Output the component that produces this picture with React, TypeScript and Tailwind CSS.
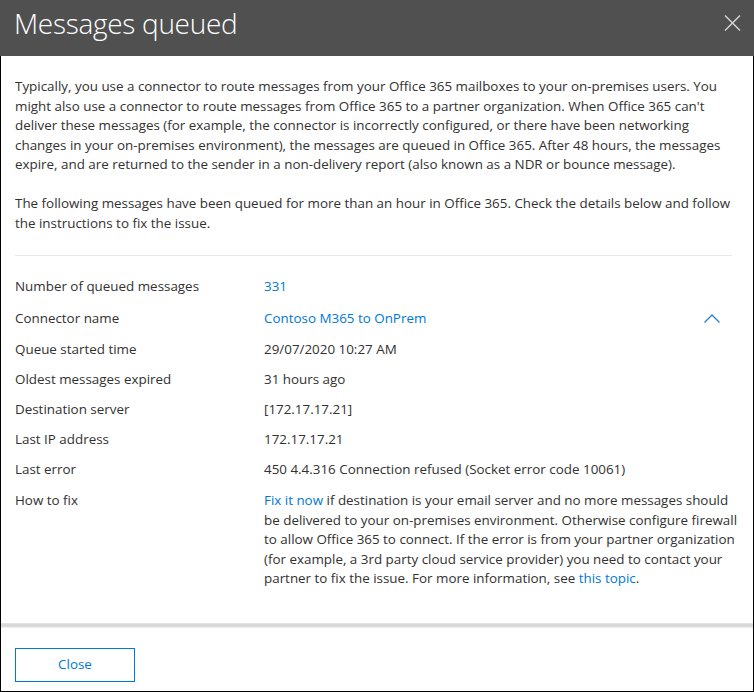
const rows: { label: string; value: React.ReactNode; tall?: boolean }[] = [
  { label: "Number of queued messages", value: <a className="text-[#0078d4]">331</a> },
  { label: "Connector name", value: <a className="text-[#0078d4]">Contoso M365 to OnPrem</a>, tall: true },
  { label: "Queue started time", value: "29/07/2020 10:27 AM" },
  { label: "Oldest messages expired", value: "31 hours ago" },
  { label: "Destination server", value: "[172.17.17.21]" },
  { label: "Last IP address", value: "172.17.17.21" },
  { label: "Last error", value: "450 4.4.316 Connection refused (Socket error code 10061)" },
];

export default function App() {
  return (
    <div
      className="w-[754px] h-[692px] flex flex-col bg-white border-x border-b border-black text-[#323130] text-[13.4px] leading-[19.5px]"
      style={{ fontFamily: '"Segoe UI", "Open Sans", "Noto Sans", sans-serif' }}
    >
      {/* header */}
      <div className="h-[56px] -mx-px bg-[#505050] flex items-start justify-between pl-[14px] pr-[13px]">
        <h1 className="text-white text-[28px] font-light leading-none mt-[9px] tracking-[-0.3px]">Messages queued</h1>
        <button className="mt-[15px] text-[#d6d6d6]">
          <svg width="17" height="16" viewBox="0 0 17 16" fill="none" stroke="currentColor" strokeWidth="1.4">
            <path d="M1 0.5 16 15.5M16 0.5 1 15.5" />
          </svg>
        </button>
      </div>

      {/* body */}
      <div className="flex-1 pl-[14px] pr-[21px] pt-[21px]">
        <p className="whitespace-nowrap">
          Typically, you use a connector to route messages from your Office 365 mailboxes to your on-premises users. You
          <br />
          might also use a connector to route messages from Office 365 to a partner organization. When Office 365 can't
          <br />
          deliver these messages (for example, the connector is incorrectly configured, or there have been networking
          <br />
          changes in your on-premises environment), the messages are queued in Office 365. After 48 hours, the messages
          <br />
          expire, and are returned to the sender in a non-delivery report (also known as a NDR or bounce message).
        </p>
        <p className="mt-[19.5px] whitespace-nowrap">
          The following messages have been queued for more than an hour in Office 365. Check the details below and follow
          <br />
          the instructions to fix the issue.
        </p>

        <div className="mt-[22px] border-t border-[#e8e8e8]" />

        <div className="mt-[16px]">
          {rows.map((r) => (
            <div key={r.label} className={`flex items-center ${r.tall ? "h-[33px]" : "h-[30px]"}`}>
              <div className="w-[249px] shrink-0">{r.label}</div>
              <div className="flex-1">{r.value}</div>
              {r.tall && (
                <svg width="16" height="9" viewBox="0 0 16 9" fill="none" stroke="#2b7cd3" strokeWidth="1.3" className="mr-[12px]">
                  <path d="M0.5 8.5 8 1 15.5 8.5" />
                </svg>
              )}
            </div>
          ))}
          <div className="flex pt-[6px]">
            <div className="w-[249px] shrink-0">How to fix</div>
            <p className="whitespace-nowrap">
              <a className="text-[#0078d4]">Fix it now</a> if destination is your email server and no more messages should
              <br />
              be delivered to your on-premises environment. Otherwise configure firewall
              <br />
              to allow Office 365 to connect. If the error is from your partner organization
              <br />
              (for example, a 3rd party cloud service provider) you need to contact your
              <br />
              partner to fix the issue. For more information, see <a className="text-[#0078d4]">this topic</a>.
            </p>
          </div>
        </div>
      </div>

      {/* footer */}
      <div className="h-[68px] relative pl-[14px] pt-[25px]">
        <div className="absolute left-0 right-0 top-0 h-[5px] bg-gradient-to-b from-[#e6e6e6] via-[#d4d4d4] to-[#f2f2f2]" />
        <button className="w-[120px] h-[34px] border border-[#0078d4] text-[#0078d4]">Close</button>
      </div>
    </div>
  );
}
